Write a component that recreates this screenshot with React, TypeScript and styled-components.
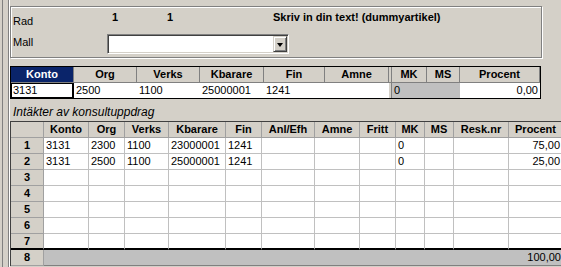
import React from "react"
import styled, { createGlobalStyle, css } from "styled-components"

const GlobalStyle = createGlobalStyle`
html, body {
    margin: 0;
    padding: 0;
    background: #d4d0c8;
    overflow: hidden;
}
body {
    font-family: "Liberation Sans", Arial, sans-serif;
    font-size: 11px;
    color: #000;
}
`

const Page = styled.div`
display: flex;
width: 561px;
height: 267px;
overflow: hidden;
background: #d4d0c8;
`

const LeftRail = styled.div`
flex: none;
width: 10px;
background: linear-gradient(to right, #d4d0c8 0 2px, #808080 2px 3px, #d4d0c8 3px 8px, #808080 8px 9px, #fff 9px 10px);
`

const Main = styled.div`
flex: 1;
min-width: 0;
display: flex;
flex-direction: column;
padding-top: 6px;
`

const GroupBox = styled.div`
box-sizing: border-box;
width: 532px;
height: 52px;
padding: 4px 0 0 2px;
border: 1px solid #808080;
box-shadow: 1px 1px 0 #fff, inset 1px 1px 0 #fff;
`

const FieldRow = styled.div<{ $gap?: number }>`
display: flex;
align-items: flex-start;
margin-top: ${p => p.$gap || 0}px;
height: ${p => (p.$gap ? 20 : 17)}px;
white-space: nowrap;
`

const FieldLabel = styled.div<{ $w: number; $drop: number }>`
flex: none;
width: ${p => p.$w}px;
margin-top: ${p => p.$drop}px;
line-height: 13px;
`

const FieldValue = styled.div<{ $w?: number }>`
flex: none;
width: ${p => (p.$w ? `${p.$w}px` : "auto")};
line-height: 13px;
font-weight: bold;
`

const Combo = styled.div`
box-sizing: border-box;
display: flex;
justify-content: flex-end;
width: 182px;
height: 20px;
padding: 1px;
background: #fff;
border: 1px solid;
border-color: #808080 #fff #fff #808080;
box-shadow: inset 1px 1px 0 #404040, inset -1px -1px 0 #d4d0c8;
`

const ComboButton = styled.div`
box-sizing: border-box;
display: flex;
align-items: center;
justify-content: center;
width: 14px;
height: 16px;
background: #d4d0c8;
border: 1px solid;
border-color: #d4d0c8 #404040 #404040 #d4d0c8;
box-shadow: inset 1px 1px 0 #fff, inset -1px -1px 0 #808080;
`

const ComboArrow = styled.div`
width: 0;
height: 0;
border-left: 3.5px solid transparent;
border-right: 3.5px solid transparent;
border-top: 4px solid #000;
margin-top: 1px;
`

const EditTable = styled.div`
display: grid;
grid-template-columns: 63px 63px 63px 64px 61px 64px 3px 35px 33px 80px;
width: 529px;
margin-top: 8px;
border: 1px solid #000;
`

const cellText = css`
box-sizing: border-box;
height: 15px;
line-height: 15px;
white-space: nowrap;
overflow: hidden;
`

const EditHead = styled.div<{ $active?: boolean }>`
${cellText};
height: 16px;
line-height: 15px;
text-align: center;
font-weight: bold;
background: ${p => (p.$active ? "#0a246a" : "#d4d0c8")};
color: ${p => (p.$active ? "#fff" : "#000")};
border-right: 1px solid #808080;
border-bottom: 1px solid #808080;
`

const EditCell = styled.div<{ $grey?: boolean; $right?: boolean; $focus?: boolean }>`
${cellText};
padding: 0 2px;
background: ${p => (p.$grey ? "#c0c0c0" : "#fff")};
text-align: ${p => (p.$right ? "right" : "left")};
${p => p.$focus && css`
    box-shadow: inset 1px 0 0 #000, inset -2px 0 0 #000, inset 0 1px 0 #000, inset 0 -1px 0 #000;
`}
`

const Splitter = styled.div<{ $head?: boolean }>`
box-sizing: border-box;
background: #d4d0c8;
border-right: 1px solid #808080;
border-bottom: ${p => (p.$head ? "1px solid #808080" : "none")};
`

const Caption = styled.div`
margin: 7px 0 2px 3px;
line-height: 13px;
font-style: italic;
font-size: 12px;
white-space: nowrap;
`

const Grid = styled.div`
display: grid;
grid-template-columns: 33px 45px 36px 44px 57px 36px 53px 45px 36px 29px 29px 55px 54px;
width: 552px;
border-top: 1px solid #404040;
border-left: 1px solid #404040;
`

const GridHead = styled.div`
${cellText};
height: 16px;
text-align: center;
font-weight: bold;
background: #d4d0c8;
border-right: 1px solid #a0a0a0;
border-bottom: 1px solid #a0a0a0;
`

const RowHead = styled(GridHead)<{ $dark?: boolean }>`
${p => p.$dark && css`border-bottom: 2px solid #000;`}
`

const GridCell = styled.div<{ $right?: boolean; $dark?: boolean }>`
${cellText};
height: 16px;
padding: 0 2px;
background: #fff;
text-align: ${p => (p.$right ? "right" : "left")};
border-right: 1px solid #c0c0c0;
border-bottom: ${p => (p.$dark ? "2px solid #000" : "1px solid #c0c0c0")};
`

const TotalCell = styled.div`
${cellText};
height: 16px;
grid-column: 2 / -1;
padding-right: 2px;
text-align: right;
background: #c0c0c0;
border-bottom: 1px solid #808080;
`

const gridCols = ["Konto", "Org", "Verks", "Kbarare", "Fin", "Anl/Efh", "Amne", "Fritt", "MK", "MS", "Resk.nr", "Procent"]

const rows: string[][] = [
    ["3131", "2300", "1100", "23000001", "1241", "", "", "", "0", "", "", "75,00"],
    ["3131", "2500", "1100", "25000001", "1241", "", "", "", "0", "", "", "25,00"],
    [], [], [], [], [],
]

const App: React.FC = () => {
    return (
        <Page>
            <GlobalStyle />
            <LeftRail />
            <Main>
                <GroupBox>
                    <FieldRow>
                        <FieldLabel $w={99} $drop={4}>Rad</FieldLabel>
                        <FieldValue $w={55}>1</FieldValue>
                        <FieldValue $w={106}>1</FieldValue>
                        <FieldValue>Skriv in din text! (dummyartikel)</FieldValue>
                    </FieldRow>
                    <FieldRow $gap={6}>
                        <FieldLabel $w={94} $drop={2}>Mall</FieldLabel>
                        <Combo>
                            <ComboButton><ComboArrow /></ComboButton>
                        </Combo>
                    </FieldRow>
                </GroupBox>

                <EditTable>
                    <EditHead $active>Konto</EditHead>
                    <EditHead>Org</EditHead>
                    <EditHead>Verks</EditHead>
                    <EditHead>Kbarare</EditHead>
                    <EditHead>Fin</EditHead>
                    <EditHead>Amne</EditHead>
                    <Splitter $head />
                    <EditHead>MK</EditHead>
                    <EditHead>MS</EditHead>
                    <EditHead>Procent</EditHead>

                    <EditCell $focus>3131</EditCell>
                    <EditCell>2500</EditCell>
                    <EditCell>1100</EditCell>
                    <EditCell>25000001</EditCell>
                    <EditCell>1241</EditCell>
                    <EditCell />
                    <Splitter />
                    <EditCell $grey>0</EditCell>
                    <EditCell $grey />
                    <EditCell $right>0,00</EditCell>
                </EditTable>

                <Caption>Intäkter av konsultuppdrag</Caption>

                <Grid>
                    <GridHead />
                    {gridCols.map(c => <GridHead key={c}>{c}</GridHead>)}
                    {rows.map((r, i) => {
                        const dark = i === rows.length - 1
                        return (
                            <React.Fragment key={i}>
                                <RowHead $dark={dark}>{i + 1}</RowHead>
                                {gridCols.map((c, j) => (
                                    <GridCell key={c} $dark={dark} $right={c === "Procent"}>{r[j] || ""}</GridCell>
                                ))}
                            </React.Fragment>
                        )
                    })}
                    <RowHead>{rows.length + 1}</RowHead>
                    <TotalCell>100,00</TotalCell>
                </Grid>
            </Main>
        </Page>
    )
}

export default App
